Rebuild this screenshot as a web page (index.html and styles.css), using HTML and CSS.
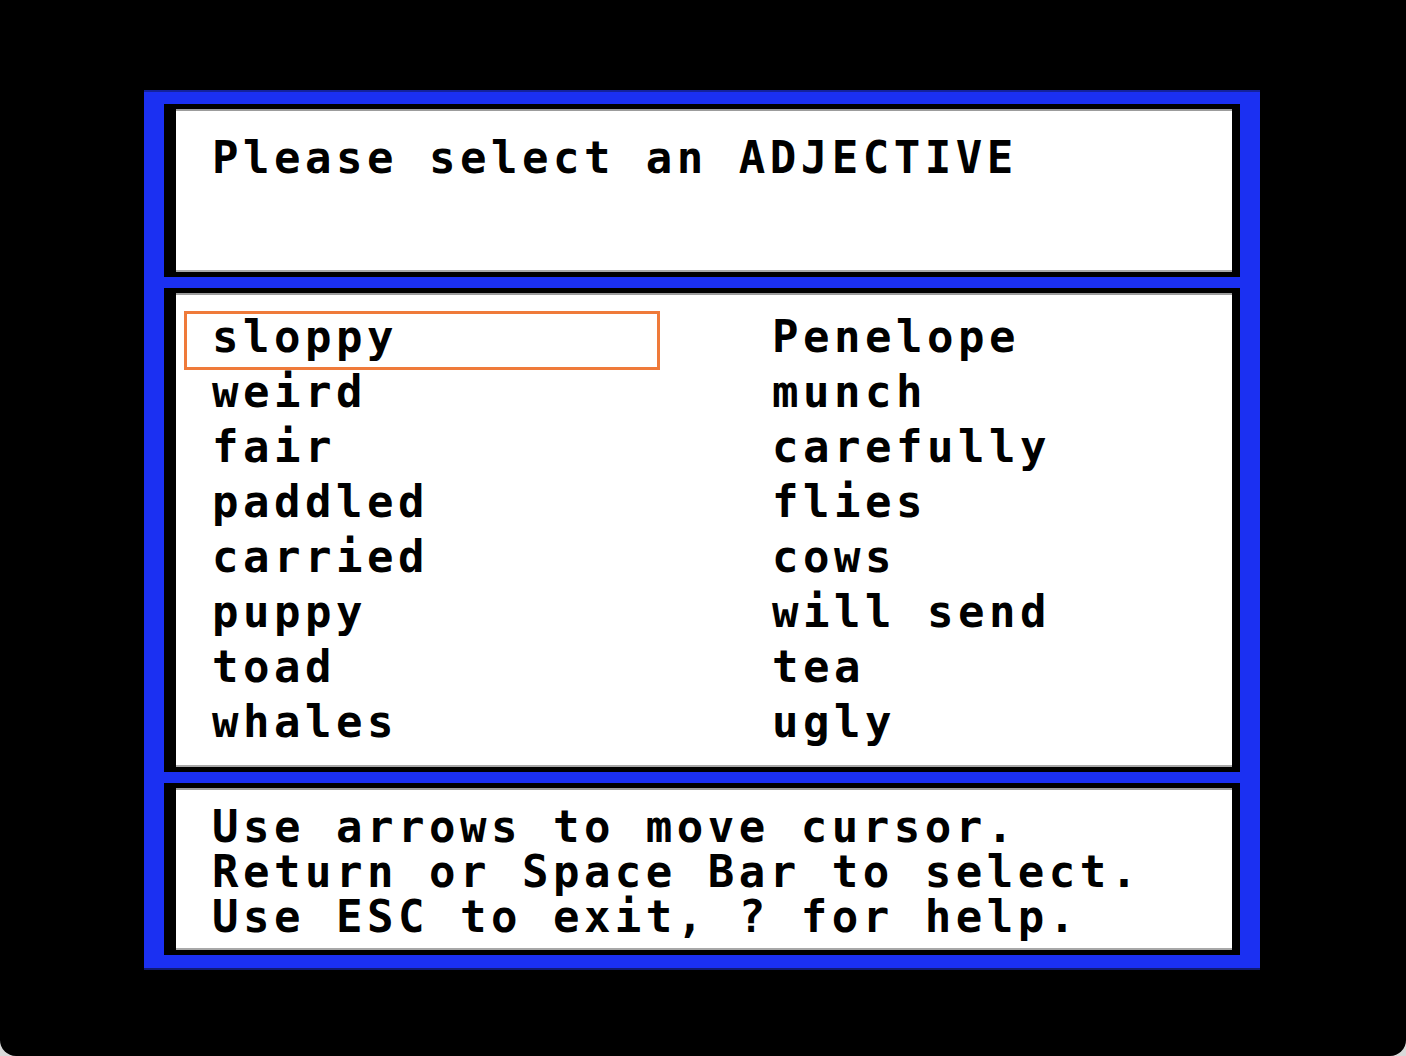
FILE: index.html
```html
<!DOCTYPE html>
<html>
<head>
<meta charset="utf-8">
<link rel="stylesheet" href="styles.css">
</head>
<body>
<div class="screen">
  <div class="frame">
    <div class="panel panel-top">
      <div class="sheet prompt"><span class="txt">Please select an ADJECTIVE</span></div>
    </div>
    <div class="panel panel-list">
      <div class="sheet words">
        <div class="word selected">sloppy</div>
        <div class="word">Penelope</div>
        <div class="word">weird</div>
        <div class="word">munch</div>
        <div class="word">fair</div>
        <div class="word">carefully</div>
        <div class="word">paddled</div>
        <div class="word">flies</div>
        <div class="word">carried</div>
        <div class="word">cows</div>
        <div class="word">puppy</div>
        <div class="word">will send</div>
        <div class="word">toad</div>
        <div class="word">tea</div>
        <div class="word">whales</div>
        <div class="word">ugly</div>
      </div>
    </div>
    <div class="panel panel-help">
      <div class="sheet help">
        <div class="line">Use arrows to move cursor.</div>
        <div class="line">Return or Space Bar to select.</div>
        <div class="line">Use ESC to exit, ? for help.</div>
      </div>
    </div>
  </div>
</div>
</body>
</html>
```

FILE: styles.css
```css
html, body {
  margin: 0;
  padding: 0;
  background: #d9d9d9;
}

.screen {
  width: 1406px;
  height: 1056px;
  box-sizing: border-box;
  background: #000;
  border-radius: 0 0 16px 16px;
  padding: 90px 0 0 144px;
}

.frame {
  width: 1116px;
  height: 880px;
  box-sizing: border-box;
  background: #1b30f2;
  border-top: 2px solid #14229c;
  border-bottom: 2px solid #101a70;
  padding: 12px 20px 13px 20px;
  display: flex;
  flex-direction: column;
  gap: 11px;
}

.panel {
  background: #000;
  padding: 5px 8px 5px 12px;
  display: flex;
  box-sizing: border-box;
}

.panel-top { height: 173px; }
.panel-list { height: 484px; }
.panel-help { height: 172px; }

.sheet {
  flex: 1;
  background: #fff;
  box-sizing: border-box;
  border-top: 2px solid #9c9c9c;
  border-bottom: 2px solid #a8a8a8;
  font-family: "DejaVu Sans Mono", "Liberation Mono", monospace;
  font-weight: bold;
  font-size: 44px;
  letter-spacing: 4.5px;
  color: #000;
}

.txt, .word, .line {
  white-space: pre;
}

.prompt {
  padding: 25px 0 0 36px;
  line-height: 44px;
}

.words {
  padding: 14px 0 0 36px;
  display: grid;
  grid-template-columns: 560px 1fr;
  grid-auto-rows: 55px;
  align-content: start;
  line-height: 55px;
}

.word {
  position: relative;
}

.selected::before {
  content: "";
  position: absolute;
  top: 2px;
  left: -28px;
  width: 476px;
  height: 59px;
  box-sizing: border-box;
  border: 3px solid #ef7a3a;
}

.help {
  padding: 14px 0 0 36px;
  line-height: 45px;
}
```
